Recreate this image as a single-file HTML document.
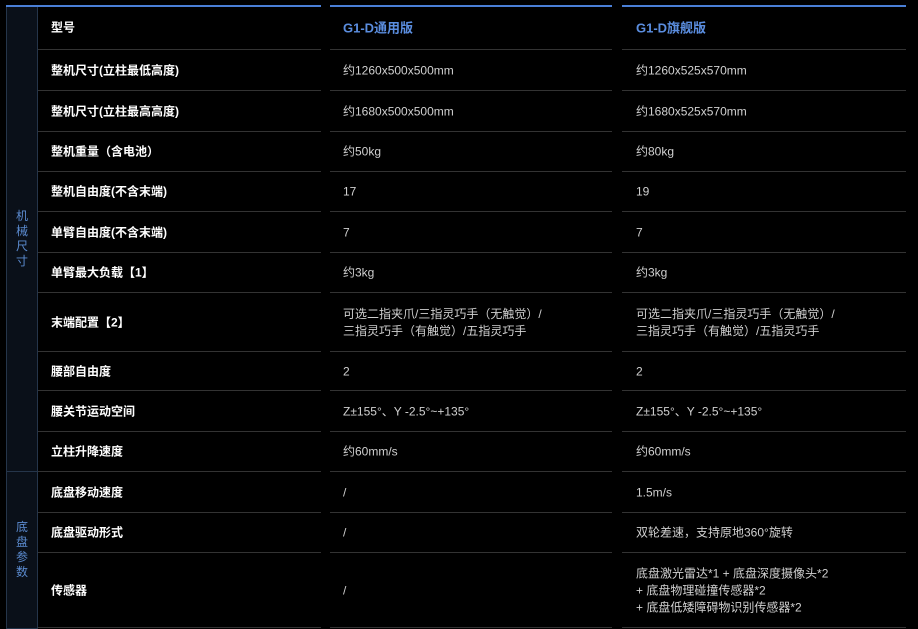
<!DOCTYPE html>
<html><head><meta charset="utf-8"><style>
*{margin:0;padding:0;box-sizing:border-box}
body{width:918px;height:629px;background:#000;position:relative;overflow:hidden;font-family:"Liberation Sans","Noto Sans CJK SC",sans-serif}
.side{position:absolute;left:6px;width:32px;background:#0a1019;border:1px solid #25354a;color:#5b8bd0;font-size:12px;line-height:15px;display:flex;align-items:center;justify-content:center;text-align:center}
.side span{width:14px;display:block}
.bl{position:absolute;top:5px;height:2px;background:#4a7fd6}
.hl{position:absolute;height:1px;background:#333}
.t{position:absolute;font-size:12px;color:#d0d0d0;line-height:17px;transform:translateY(-50%)}
.lab{color:#fff;font-weight:bold}
.hd{color:#5b8ee0;font-weight:bold;font-size:13px}
</style></head><body>
<div class="side" style="top:5px;height:467px"><span>机械尺寸</span></div>
<div class="side" style="top:471px;height:158px"><span>底盘参数</span></div>
<div class="bl" style="left:6px;width:315px"></div>
<div class="bl" style="left:330px;width:282px"></div>
<div class="bl" style="left:622px;width:284px"></div>
<div id="lines"></div>
<script>
var ys=[49,90,131,171,211,252,292,351,390,431,471,512,552,627];
var h='';
ys.forEach(function(y){h+='<div class="hl" style="top:'+y+'px;left:38px;width:283px"></div><div class="hl" style="top:'+y+'px;left:330px;width:282px"></div><div class="hl" style="top:'+y+'px;left:622px;width:284px"></div>';});
var rows=[
['型号','G1-D通用版','G1-D旗舰版'],
['整机尺寸(立柱最低高度)','约1260x500x500mm','约1260x525x570mm'],
['整机尺寸(立柱最高高度)','约1680x500x500mm','约1680x525x570mm'],
['整机重量（含电池）','约50kg','约80kg'],
['整机自由度(不含末端)','17','19'],
['单臂自由度(不含末端)','7','7'],
['单臂最大负载【1】','约3kg','约3kg'],
['末端配置【2】','可选二指夹爪/三指灵巧手（无触觉）/<br>三指灵巧手（有触觉）/五指灵巧手','可选二指夹爪/三指灵巧手（无触觉）/<br>三指灵巧手（有触觉）/五指灵巧手'],
['腰部自由度','2','2'],
['腰关节运动空间','Z±155°、Y -2.5°~+135°','Z±155°、Y -2.5°~+135°'],
['立柱升降速度','约60mm/s','约60mm/s'],
['底盘移动速度','/','1.5m/s'],
['底盘驱动形式','/','双轮差速，支持原地360°旋转'],
['传感器','/','底盘激光雷达*1 + 底盘深度摄像头*2<br>+ 底盘物理碰撞传感器*2<br>+ 底盘低矮障碍物识别传感器*2']
];
var tops=[5].concat(ys);
rows.forEach(function(r,i){var c=(tops[i]+tops[i+1])/2+1;
h+='<div class="t lab" style="left:51px;top:'+c+'px">'+r[0]+'</div>';
var cls=i==0?'t hd':'t';
h+='<div class="'+cls+'" style="left:343px;top:'+c+'px">'+r[1]+'</div>';
h+='<div class="'+cls+'" style="left:636px;top:'+c+'px">'+r[2]+'</div>';});
document.getElementById('lines').innerHTML=h;
</script>
</body></html>
